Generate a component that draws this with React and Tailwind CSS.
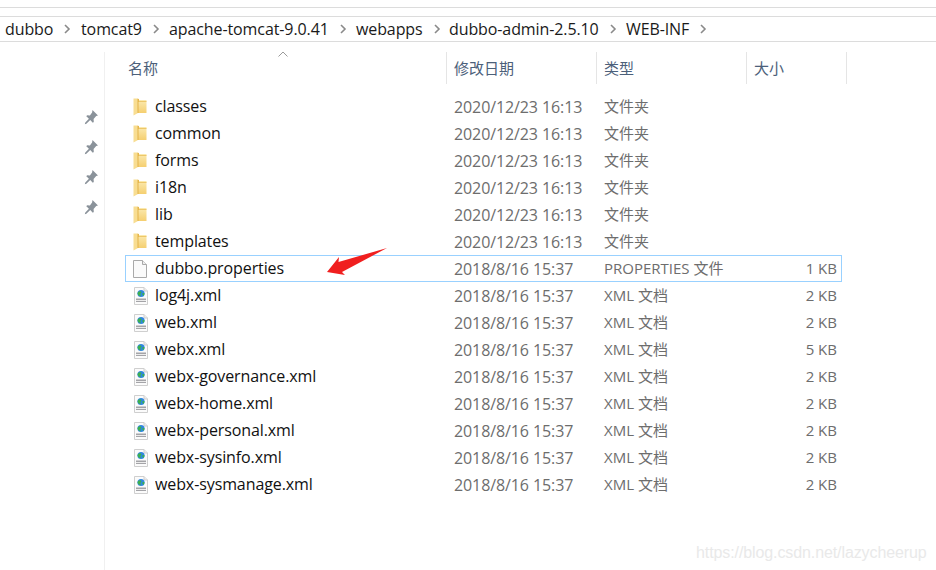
const font = { fontFamily: '"Open Sans","Noto Sans CJK SC",sans-serif' };

const crumbs = [
  ['dubbo', 'w-[76px]', 'gap-[10px]'],
  ['tomcat9', 'w-[88px]', 'gap-[10px]'],
  ['apache-tomcat-9.0.41', 'w-[187px]', 'gap-[10px]'],
  ['webapps', 'w-[93px]', 'gap-[10px]'],
  ['dubbo-admin-2.5.10', 'w-[177px]', 'gap-[10px]'],
  ['WEB-INF', 'w-[90px]', 'gap-[10px]'],
];

const folders = ['classes', 'common', 'forms', 'i18n', 'lib', 'templates'];
const xmls = [
  ['log4j.xml', '2 KB'],
  ['web.xml', '2 KB'],
  ['webx.xml', '5 KB'],
  ['webx-governance.xml', '2 KB'],
  ['webx-home.xml', '2 KB'],
  ['webx-personal.xml', '2 KB'],
  ['webx-sysinfo.xml', '2 KB'],
  ['webx-sysmanage.xml', '2 KB'],
];

function Chevron() {
  return (
    <svg width="8" height="10" viewBox="0 0 8 10" className="shrink-0">
      <path d="M2 1l4 4-4 4" fill="none" stroke="#8a8a8a" strokeWidth="1.6" />
    </svg>
  );
}

function Pin() {
  return (
    <svg width="16" height="16" viewBox="0 0 16 16">
      <path d="M9.5 1l5.5 5.5-1.8.6-2.6 3 .2 2.8-1 .8-2.6-2.6-3.8 3.6-1.6.5.5-1.6 3.6-3.8-2.6-2.6.8-1 2.8.2 2.2-2.8z" fill="#8a929a" />
    </svg>
  );
}

function Folder() {
  return (
    <svg width="14" height="18" viewBox="0 0 14 18" className="mr-[1px]">
      <defs>
        <linearGradient id="fg" x1="0" y1="0" x2="0" y2="1">
          <stop offset="0" stopColor="#fbeab0" />
          <stop offset="1" stopColor="#f5cf70" />
        </linearGradient>
      </defs>
      <path d="M4 2h9.5v13H4z" fill="url(#fg)" />
      <path d="M5 1h1v2.2h7.5V4H5z" fill="#e9bd55" />
      <path d="M0.5 0.5h4.5v14.5l-4.5 2.5z" fill="#f8dd92" />
      <path d="M5 0.8v14.2" stroke="#e3b249" strokeWidth="1" />
    </svg>
  );
}

function Doc() {
  return (
    <svg width="14" height="18" viewBox="0 0 14 18" className="mr-[1px]">
      <path d="M0.5 0.5h9l4 4v13H0.5z" fill="#fafafa" stroke="#a9a9a9" />
      <path d="M9.5 0.5v4h4" fill="#eeeeee" stroke="#a9a9a9" />
    </svg>
  );
}

function XmlIcon() {
  return (
    <svg width="16" height="18" viewBox="0 0 16 18">
      <path d="M1.5 0.5h9.5l3.5 3.5v13.5h-13z" fill="#fbfbfb" stroke="#cfcfcf" />
      <path d="M11 0.5v3.5h3.5" fill="#ececec" stroke="#cfcfcf" />
      <rect x="3" y="11.5" width="10" height="3.5" fill="#a4a4a8" />
      <rect x="3" y="13" width="10" height="1" fill="#ececec" />
      <circle cx="8" cy="6.5" r="3.6" fill="#2f86e0" />
      <path d="M5.4 4.8c1.2-1 2.4-.8 3 .1.4 1-.8 1.1-1 2-.2.8.6 1.4.4 2.3-1.4-.1-2.9-1-3.2-2.4-.1-.7.2-1.4.8-2zM9.5 6.2c.8-.4 1.5-.3 2.1.3-.1 1-.6 1.9-1.4 2.3-.6-.7-1.2-1.8-.7-2.6z" fill="#3cb04e" />
    </svg>
  );
}

function Row({ icon, name, date, type, size, selected }) {
  return (
    <div
      className={
        'flex h-[27px] w-[717px] items-center border ' +
        (selected ? 'border-[#99d1ff]' : 'border-transparent')
      }
    >
      <div className="flex w-[29px] shrink-0 justify-center">{icon}</div>
      <div className="w-[299px] shrink-0 truncate pb-[2px] text-[16px] tracking-[-0.1px] text-[#111111]">{name}</div>
      <div className="w-[150px] shrink-0 text-[16px] tracking-[-0.1px] text-[#6d6d6d]">{date}</div>
      <div className="w-[150px] shrink-0 text-[15px] text-[#6d6d6d]">{type}</div>
      <div className="w-[83px] shrink-0 text-right text-[15px] text-[#6d6d6d]">{size}</div>
    </div>
  );
}

function Head({ label, className }) {
  return (
    <div className={'flex h-full items-center border-r border-[#e5e5e5] text-[15px] text-[#4c607a] ' + className}>
      {label}
    </div>
  );
}

export default function App() {
  return (
    <div className="relative h-[570px] w-[936px] overflow-hidden bg-white" style={font}>
      <div className="h-[8px] border-b border-[#dcdcdc]" />
      <div className="h-[9px] border-b border-[#dcdcdc]" />
      <div className="flex h-[25px] items-center border-b border-[#dcdcdc] pl-[5px] text-[16px] tracking-[-0.1px] text-[#1a1a1a]">
        {crumbs.map(([c, w, g]) => (
          <div key={c} className={'flex shrink-0 items-center ' + w + ' ' + g}>
            <span className="whitespace-nowrap">{c}</span>
            <Chevron />
          </div>
        ))}
      </div>
      <div className="flex h-[528px] pt-[10px]">
        <div className="flex w-[105px] shrink-0 flex-col items-end gap-[14px] border-r border-[#f0f0f0] pt-[57px] pr-[5px]">
          <Pin />
          <Pin />
          <Pin />
          <Pin />
        </div>
        <div className="flex flex-col pl-[20px]">
          <div className="relative flex h-[32px] items-center">
            <div className="absolute top-[-1px] left-[153px] h-[6px] w-[10px]">
              <svg width="10" height="6" viewBox="0 0 10 6">
                <path d="M0.5 5.5L5 1l4.5 4.5" fill="none" stroke="#9a9a9a" />
              </svg>
            </div>
            <Head label="名称" className="w-[322px] pl-[3px]" />
            <Head label="修改日期" className="w-[150px] pl-[7px]" />
            <Head label="类型" className="w-[150px] pl-[7px]" />
            <Head label="大小" className="w-[100px] pl-[7px]" />
          </div>
          <div className="flex flex-col pt-[9px]">
            {folders.map((f) => (
              <Row key={f} icon={<Folder />} name={f} date="2020/12/23 16:13" type="文件夹" size="" />
            ))}
            <Row selected icon={<Doc />} name="dubbo.properties" date="2018/8/16 15:37" type="PROPERTIES 文件" size="1 KB" />
            {xmls.map(([n, s]) => (
              <Row key={n} icon={<XmlIcon />} name={n} date="2018/8/16 15:37" type="XML 文档" size={s} />
            ))}
          </div>
        </div>
      </div>
      <svg className="absolute top-[246px] left-[326px]" width="62" height="30" viewBox="0 0 62 30">
        <path d="M61 2L12.5 16 13 11 1 26 19 29 16 26z" fill="#f01f1f" />
      </svg>
      <div className="absolute top-[541px] left-[696px] text-[16px] tracking-[-0.1px] whitespace-nowrap text-[#e9e9e9]" style={{ fontFamily: '"Liberation Sans",sans-serif' }}>
        https://blog.csdn.net/lazycheerup
      </div>
    </div>
  );
}
